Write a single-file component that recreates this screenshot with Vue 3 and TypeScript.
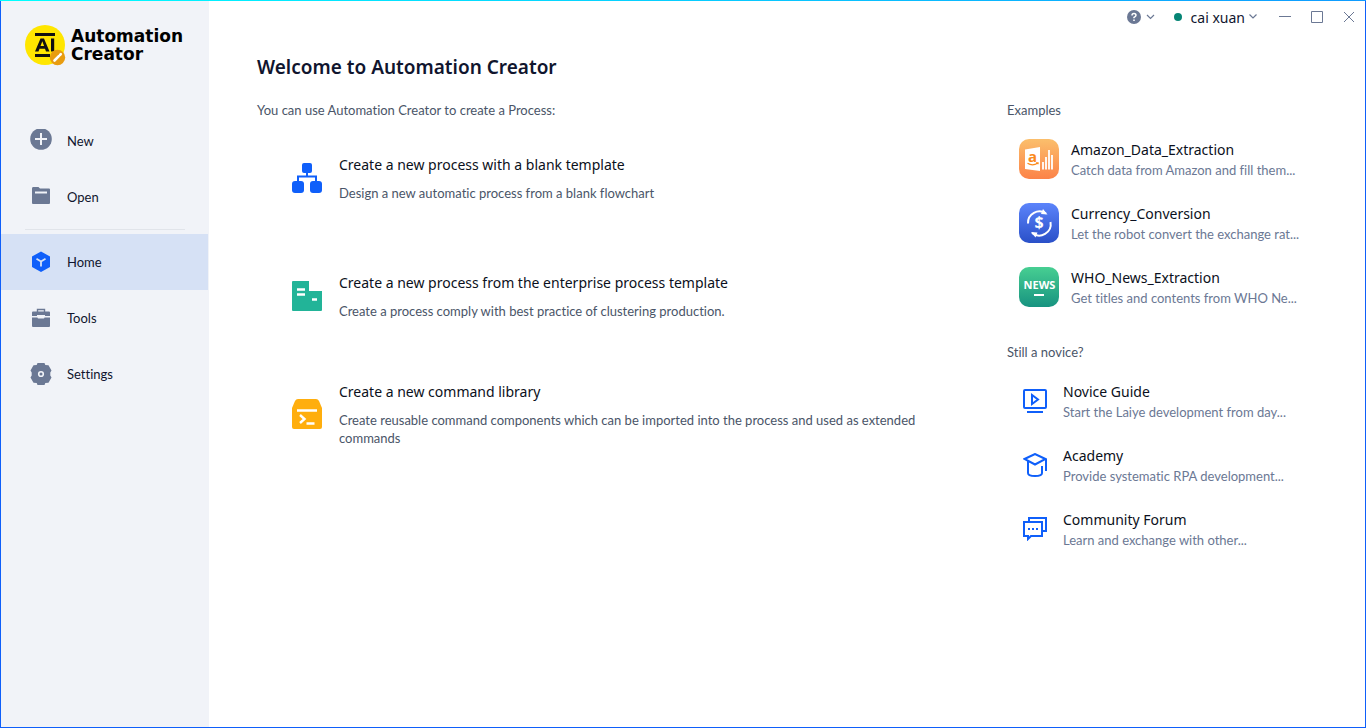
<script setup lang="ts">
interface Item { id: string; title: string; text: string }

const navTop = [{ id: 'new', label: 'New' }, { id: 'open', label: 'Open' }]
const navMain = [
  { id: 'home', label: 'Home' },
  { id: 'tools', label: 'Tools' },
  { id: 'settings', label: 'Settings' },
]

const creators: Item[] = [
  { id: 'blank', title: 'Create a new process with a blank template', text: 'Design a new automatic process from a blank flowchart' },
  { id: 'enterprise', title: 'Create a new process from the enterprise process template', text: 'Create a process comply with best practice of clustering production.' },
  { id: 'library', title: 'Create a new command library', text: 'Create reusable command components which can be imported into the process and used as extended commands' },
]

const examples: Item[] = [
  { id: 'amazon', title: 'Amazon_Data_Extraction', text: 'Catch data from Amazon and fill them...' },
  { id: 'currency', title: 'Currency_Conversion', text: 'Let the robot convert the exchange rat...' },
  { id: 'news', title: 'WHO_News_Extraction', text: 'Get titles and contents from WHO Ne...' },
]

const guides: Item[] = [
  { id: 'guide', title: 'Novice Guide', text: 'Start the Laiye development from day...' },
  { id: 'academy', title: 'Academy', text: 'Provide systematic RPA development...' },
  { id: 'forum', title: 'Community Forum', text: 'Learn and exchange with other...' },
]
</script>

<template>
  <div class="window">
    <aside class="sidebar">
      <div class="brand">
        <svg class="brand-mark" viewBox="0 0 42 42" aria-hidden="true">
          <circle cx="20" cy="20" r="20" fill="#ffe600" />
          <path d="M10 8h20v3H10zM10 29h15v3H10z" fill="#111" />
          <path d="M10 26.500 15.500 13.500h3.500L24.500 26.500h-3.500l-1-2.800h-5.500l-1 2.800zM15.500 21h3.600l-1.800-4.800zM26 13.500h3.200v13H26z" fill="#111" />
          <circle cx="32.500" cy="32.500" r="7.700" fill="#e89c10" />
          <path d="m29.500 35.500 4.300-4.300M35 30l.8-.8" stroke="#fff" stroke-width="2.600" stroke-linecap="round" />
        </svg>
        <div class="brand-name"><span>Automation</span><span>Creator</span></div>
      </div>

      <nav>
        <div class="nav-group">
          <button v-for="n in navTop" :key="n.id" class="nav-item" type="button">
            <svg v-if="n.id === 'new'" class="nav-icon" viewBox="0 0 24 24" aria-hidden="true">
              <circle cx="12" cy="10" r="10.800" fill="#6b7894" />
              <path d="M12 4v12M6 10h12" stroke="#f1f3f8" stroke-width="2" />
            </svg>
            <svg v-else class="nav-icon" viewBox="0 0 24 24" aria-hidden="true">
              <path d="M3 3.500Q3 2 4 2h5.500l1.500 1.500H20q1 0 1 1V18q0 1-1 1H4q-1 0-1-1z" fill="#6b7894" />
              <path d="M6 7.500h12" stroke="#f1f3f8" stroke-width="2" />
            </svg>
            <span>{{ n.label }}</span>
          </button>
        </div>
        <hr class="nav-rule" />
        <button v-for="n in navMain" :key="n.id" class="nav-item" :class="{ active: n.id === 'home' }" type="button">
          <svg v-if="n.id === 'home'" class="nav-icon" viewBox="0 0 24 24" aria-hidden="true">
            <path d="M12 1.500 21 6.500v10.500l-9 5-9-5V6.500z" fill="#0f5ffa" />
            <path d="m7.500 8.800 4.500 2.700 4.500-2.700M12 11.500v5" stroke="#d6e1f5" stroke-width="1.800" fill="none" />
          </svg>
          <svg v-else-if="n.id === 'tools'" class="nav-icon" viewBox="0 0 24 24" aria-hidden="true">
            <path d="M8.500 6V3.500h7V6" stroke="#6b7894" stroke-width="1.400" fill="none" />
            <path d="M4 5.500h16q1 0 1 1V10h-5V9H8v1H3V6.500q0-1 1-1zM3 11.500h5.500q0 1 1 1h5q1 0 1-1H21V20q0 1-1 1H4q-1 0-1-1z" fill="#6b7894" />
          </svg>
          <svg v-else class="nav-icon" viewBox="0 0 24 24" aria-hidden="true">
            <path d="M8.500 1h7l.8 2 3.200.2 3 5.300-1.200 2v3l1.200 2-3 5.300-3.200.2-.8 2h-7l-.8-2-3.200-.2-3-5.300 1.200-2v-3l-1.200-2 3-5.300L7.700 3z" fill="#6b7894" />
            <circle cx="12" cy="12" r="2.300" stroke="#f1f3f8" stroke-width="1.600" fill="none" />
          </svg>
          <span>{{ n.label }}</span>
        </button>
      </nav>
    </aside>

    <main class="main">
      <header class="titlebar">
        <button class="bar-button help" type="button" aria-label="Help">
          <svg width="28" height="16" viewBox="0 0 28 16" aria-hidden="true">
            <circle cx="7" cy="8" r="7" fill="#6b7894" />
            <path d="M5 6.500Q5 4.500 7 4.500T9 6.300Q9 7.500 7 8.400V9.300" stroke="#fff" stroke-width="1.500" fill="none" />
            <path d="M6.200 10.500h1.600V12H6.200z" fill="#fff" />
            <path d="m20 6 3.500 3.500L27 6" stroke="#6b7894" stroke-width="1.200" fill="none" />
          </svg>
        </button>
        <button class="bar-button user" type="button">
          <span class="status"></span>
          <span>cai xuan</span>
          <svg width="8" height="8" viewBox="0 0 8 8" aria-hidden="true"><path d="M.5 1.500 4 5l3.500-3.500" stroke="#6b7894" stroke-width="1.200" fill="none" /></svg>
        </button>
        <div class="controls">
          <button class="bar-button" type="button" aria-label="Minimize">
            <svg width="12" height="12" viewBox="0 0 12 12" aria-hidden="true"><path d="M0 5.500h12" stroke="#6b7894" /></svg>
          </button>
          <button class="bar-button" type="button" aria-label="Maximize">
            <svg width="12" height="12" viewBox="0 0 12 12" aria-hidden="true"><path d="M.5.500h11v11H.5z" stroke="#6b7894" fill="none" /></svg>
          </button>
          <button class="bar-button" type="button" aria-label="Close">
            <svg width="12" height="12" viewBox="0 0 12 12" aria-hidden="true"><path d="m1 1 10 10M11 1 1 11" stroke="#6b7894" fill="none" /></svg>
          </button>
        </div>
      </header>

      <h1>Welcome to Automation Creator</h1>
      <div class="columns">
        <section class="create">
          <h2>You can use Automation Creator to create a Process:</h2>
          <a v-for="c in creators" :key="c.id" class="card" :class="c.id" href="#">
            <svg v-if="c.id === 'blank'" class="card-icon" viewBox="0 0 32 32" aria-hidden="true">
              <path d="M16 10v5M7 21v-6.500h18V21" stroke="#0f5ffa" stroke-width="2" fill="none" />
              <rect x="11" y="1" width="10" height="10" rx="2" fill="#0f5ffa" />
              <rect x="1" y="19" width="12" height="12" rx="3" fill="#0f5ffa" />
              <rect x="19" y="19" width="12" height="12" rx="3" fill="#0f5ffa" />
            </svg>
            <svg v-else-if="c.id === 'enterprise'" class="card-icon" viewBox="0 0 32 32" aria-hidden="true">
              <path d="M1 2q0-1 1-1h16v10h13v19q0 1-1 1H2q-1 0-1-1z" fill="#22b498" />
              <path d="M6 9.500h8M6 14.500h8M21 19.500h5" stroke="#fff" stroke-width="2.500" />
            </svg>
            <svg v-else class="card-icon" viewBox="0 0 32 32" aria-hidden="true">
              <path d="M7 1h18q2 0 3 2l3 7v19q0 2-2 2H3q-2 0-2-2V10l3-7q1-2 3-2z" fill="#ffae0d" />
              <path d="M6 12.500h20M9 17l4.500 4L9 25M15.500 25.500h8" stroke="#fff" stroke-width="2.400" fill="none" />
            </svg>
            <div class="card-body">
              <h3>{{ c.title }}</h3>
              <p>{{ c.text }}</p>
            </div>
          </a>
        </section>

        <section class="side">
          <h2>Examples</h2>
          <div class="list examples">
            <a v-for="e in examples" :key="e.id" class="row" href="#">
              <svg class="tile" viewBox="0 0 40 40" aria-hidden="true">
                <defs>
                  <linearGradient :id="`g-${e.id}`" x2="0" y2="1">
                    <stop class="stop-top" :class="e.id" />
                    <stop class="stop-end" :class="e.id" offset="1" />
                  </linearGradient>
                </defs>
                <rect width="40" height="40" rx="10" :fill="`url(#g-${e.id})`" />
                <template v-if="e.id === 'amazon'">
                  <path d="M6 10.500 21 8v24L6 30z" fill="#fff" />
                  <text x="13.500" y="23" class="amazon-letter">a</text>
                  <path d="M8.500 24.300q5 3 10 0M17 23.800h2v1.500" stroke="#fb8a1c" stroke-width="1.300" fill="none" />
                  <path d="M24 30.500v-7.500M27 30.500V18M30 30.500V11M33 30.500V16" stroke="#fff" stroke-width="1.800" />
                </template>
                <template v-else-if="e.id === 'currency'">
                  <path d="M9 20.500A11.500 11.500 0 0 1 27 10.500M31.500 19A11.500 11.500 0 0 1 13 30" stroke="#fff" stroke-width="2" fill="none" />
                  <path d="m24 6 4.500 5.500L22 11zM16.500 34.500 12 29l6.500.5z" fill="#fff" />
                  <text x="20" y="25" class="dollar">$</text>
                </template>
                <template v-else>
                  <text x="20.500" y="22" class="news">NEWS</text>
                  <path d="M15 28h10" stroke="#fff" stroke-width="2" />
                </template>
              </svg>
              <div class="row-body"><h3>{{ e.title }}</h3><p>{{ e.text }}</p></div>
            </a>
          </div>

          <h2 class="second">Still a novice?</h2>
          <div class="list guides">
            <a v-for="g in guides" :key="g.id" class="row" href="#">
              <svg class="line-icon" viewBox="0 0 24 24" aria-hidden="true">
                <template v-if="g.id === 'guide'">
                  <rect x="1" y="1" width="22" height="18" rx="1" /><path d="M9 6v9l6-4.500zM4 23h16" />
                </template>
                <template v-else-if="g.id === 'academy'">
                  <path d="M1.500 6 12 1l10.500 5L12 11.500zM5 8v12q0 3 7 3t7-3v-7M23 6v12" />
                </template>
                <template v-else>
                  <path d="M6 5V1h17v13h-4M1 5h18v14H8l-3 3v-3H1zM5 12h2M9 12h2M13 12h2" />
                </template>
              </svg>
              <div class="row-body"><h3>{{ g.title }}</h3><p>{{ g.text }}</p></div>
            </a>
          </div>
        </section>
      </div>
    </main>
  </div>
</template>

<style>
body { margin: 0; }
</style>

<style scoped>
.window {
  box-sizing: border-box;
  display: flex;
  min-height: 100vh;
  padding: 1px;
  background:
    linear-gradient(90deg, #00ffff, #0f9bff) top / 100% 1px no-repeat,
    linear-gradient(#0f5ffa, #0f5ffa) left / 1px 100% no-repeat,
    linear-gradient(#0f5ffa, #0f5ffa) right / 1px 100% no-repeat,
    linear-gradient(#0f5ffa, #0f5ffa) bottom / 100% 1px no-repeat;
  color: #10152e;
  font-family: "Noto Sans", "Open Sans", sans-serif;
  font-size: 13px;
  font-variant-ligatures: none;
}
h1, h2, h3, p { margin: 0; font-weight: 400; }
a { color: inherit; text-decoration: none; }
button { margin: 0; padding: 0; border: 0; background: none; color: inherit; font: inherit; font-variant-ligatures: none; }
svg { display: block; flex: none; }

.sidebar { flex: none; width: 208px; background: #f1f3f8; }
.brand { display: flex; gap: 4px; padding: 24px 24px 0; }
.brand-mark { width: 42px; height: 42px; }
.brand-name {
  display: flex;
  flex-direction: column;
  padding-top: 2px;
  color: #000;
  font: 700 17px/18px "DejaVu Sans", sans-serif;
}
nav { margin-top: 46px; }
.nav-item {
  box-sizing: border-box;
  display: flex;
  align-items: center;
  gap: 14px;
  width: 207px;
  height: 56px;
  padding-left: 28px;
  font-family: Lato, sans-serif;
  text-align: left;
}
.nav-item.active { background: #d6e1f5; }
.nav-icon { width: 24px; height: 24px; }
.nav-rule { margin: 4px 24px; border: 0; border-top: 1px solid #e1e4ea; }

.main { flex: 1; min-width: 0; background: #fff; }
.titlebar { display: flex; justify-content: flex-end; align-items: center; height: 32px; padding-right: 10px; }
.bar-button { display: flex; align-items: center; }
.help { margin-right: 19px; }
.user { gap: 4px; margin-right: 22px; font-size: 14px; }
.status { width: 8px; height: 8px; margin-right: 5px; border-radius: 50%; background: #068575; }
.controls { display: flex; gap: 20px; }

h1 { margin-left: 48px; padding-top: 20px; font-size: 19px; line-height: 28px; font-weight: 600; }
.columns { display: flex; margin-top: 20px; padding-left: 48px; }
.create { flex: 1; min-width: 0; }
.side { flex: none; width: 358px; }
h2, p { font-family: Lato, sans-serif; font-size: 13px; line-height: 18px; }
h2 { color: #4a5568; }
.card { display: flex; gap: 16px; min-height: 78px; margin: 34px 60px 0 34px; }
.card + .card { margin-top: 40px; }
.card + .card + .card { margin-top: 31px; }
.card-icon { width: 32px; height: 32px; margin-top: 9px; }
.library .card-icon { margin-top: 18px; }
h3 { color: #0b1020; font-size: 14px; line-height: 24px; }
.card p { margin-top: 7px; color: #4a5568; }
.list { display: flex; flex-direction: column; gap: 24px; }
.row { display: flex; align-items: center; gap: 12px; height: 40px; }
.examples { margin: 20px 0 0 12px; }
.guides { margin: 20px 0 0 16px; }
.second { margin-top: 36px; }
.tile { width: 40px; height: 40px; }
.line-icon { width: 24px; height: 24px; margin-right: 4px; fill: none; stroke: #0f5ffa; stroke-width: 2; }
.row h3 { line-height: 22px; }
.row p { color: #6b7894; white-space: nowrap; }
.stop-top.amazon { stop-color: #fbbf6c; }
.stop-end.amazon { stop-color: #fc8348; }
.stop-top.currency { stop-color: #5c84fb; }
.stop-end.currency { stop-color: #2a50c8; }
.stop-top.news { stop-color: #47cf92; }
.stop-end.news { stop-color: #179380; }
.amazon-letter, .dollar, text.news { text-anchor: middle; font-family: "Noto Sans", sans-serif; font-weight: 700; }
.amazon-letter { fill: #fb8a1c; font-size: 15px; }
.dollar { fill: #fff; font-size: 16px; }
text.news { fill: #fff; font-size: 11px; }
</style>
